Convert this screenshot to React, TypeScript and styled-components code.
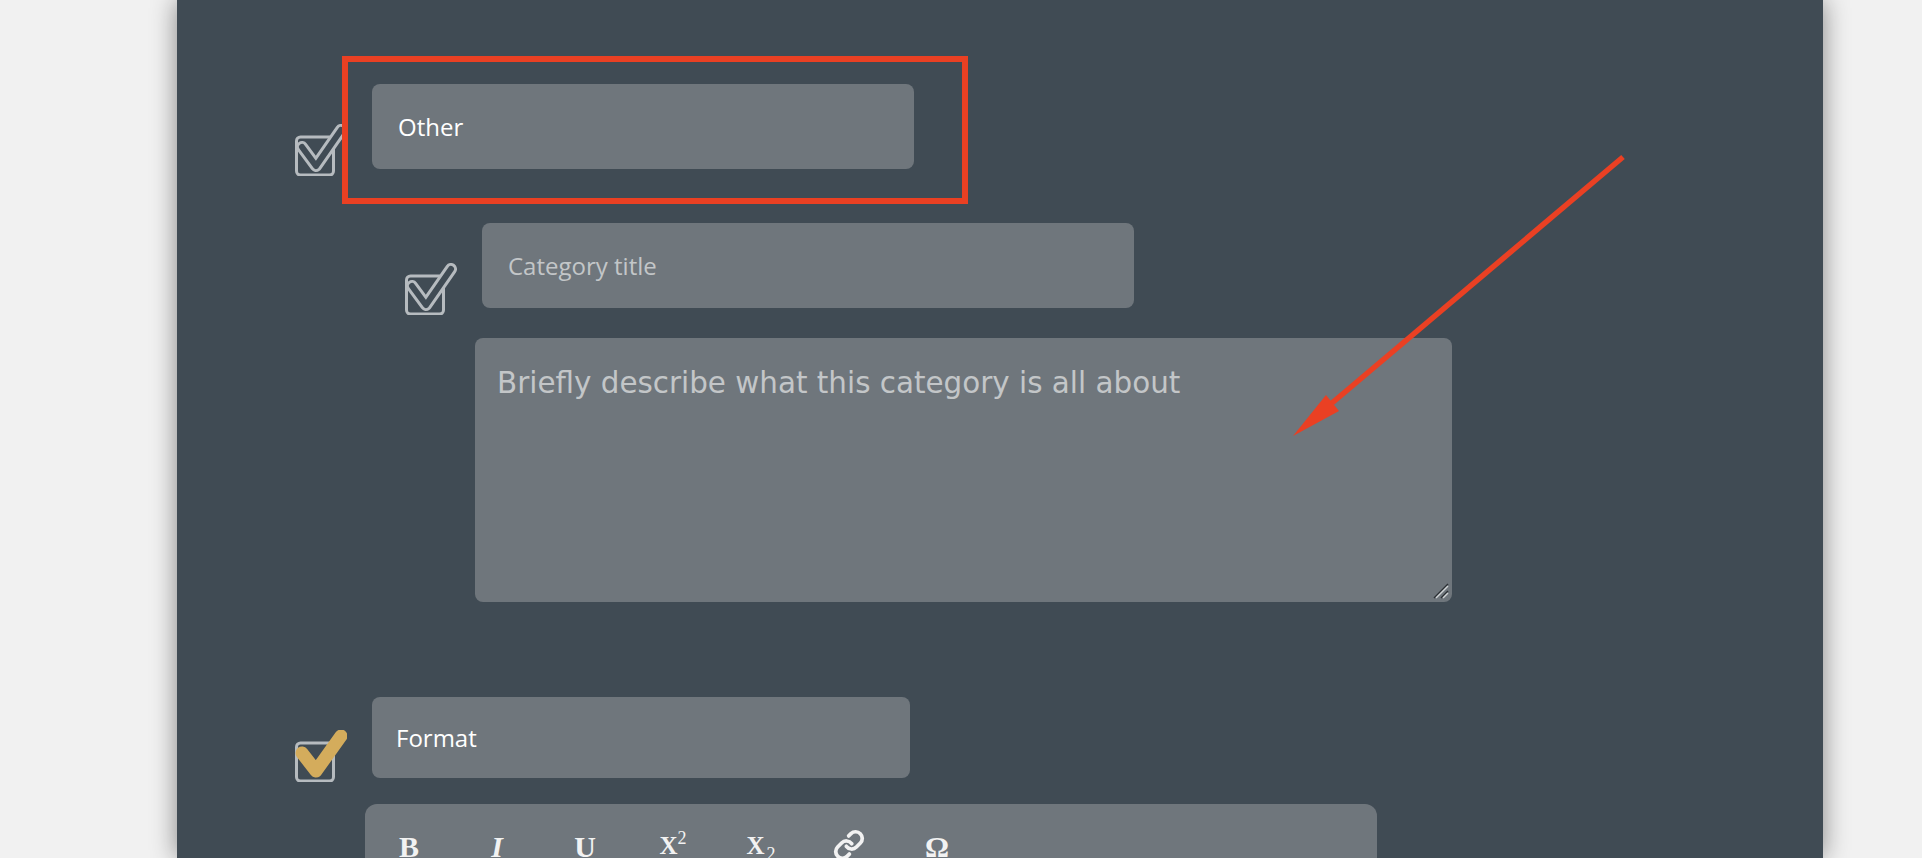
import { Link } from 'lucide-react'
import { createGlobalStyle, styled } from 'styled-components'

interface CheckProps {
  gold?: boolean
}

function Check({ gold }: CheckProps) {
  return (
    <CheckIcon viewBox="0 0 52 52">
      <rect x="1.5" y="13" width="37" height="38" rx="4" fill="none" stroke="#b6bbbf" strokeWidth="3" />
      {gold ? (
        <path d="M7 23 L21 41 L46 6" fill="none" stroke="#d4ac5c" strokeWidth="13" strokeLinecap="round" strokeLinejoin="round" />
      ) : (
        <>
          <path d="M7 23 L21 42 L46 6" fill="none" stroke="#b6bbbf" strokeWidth="12" strokeLinecap="round" strokeLinejoin="round" />
          <path d="M7 23 L21 42 L46 6" fill="none" stroke="#404b54" strokeWidth="6" strokeLinecap="round" strokeLinejoin="round" />
        </>
      )}
    </CheckIcon>
  )
}

function App() {
  return (
    <>
      <GlobalStyle />
      <Panel>
        <Row>
          <Check />
          <TitleInput $width={542} defaultValue="Other" />
        </Row>
        <Row $indent={110} $gap={47}>
          <Check />
          <TitleInput $width={652} placeholder="Category title" />
        </Row>
        <DescriptionWrap>
          <Description placeholder="Briefly describe what this category is all about" />
          <Grip viewBox="0 0 16 16">
            <path d="M1 15 L15 1" stroke="#2b2f33" strokeWidth="1.4" />
            <path d="M3 15 L15 3" stroke="#d0d3d5" strokeWidth="1.4" />
            <path d="M8 15 L15 8" stroke="#2b2f33" strokeWidth="1.4" />
            <path d="M10 15 L15 10" stroke="#d0d3d5" strokeWidth="1.4" />
          </Grip>
        </DescriptionWrap>
        <FormatRow>
          <Check gold />
          <FormatInput defaultValue="Format" />
        </FormatRow>
        <Toolbar>
          <ToolButton>B</ToolButton>
          <ItalicButton>I</ItalicButton>
          <ToolButton>U</ToolButton>
          <ScriptButton>
            X<sup>2</sup>
          </ScriptButton>
          <ScriptButton>
            X<sub>2</sub>
          </ScriptButton>
          <IconButton>
            <Link size={32} strokeWidth={2.8} />
          </IconButton>
          <ToolButton>Ω</ToolButton>
        </Toolbar>

        <RedBox />
        <Arrow viewBox="0 0 340 290">
          <path d="M335 4 L44 250" stroke="#ea4023" strokeWidth="5.5" fill="none" />
          <path d="M5 283 L38 242 L51 258 Z" fill="#ea4023" />
        </Arrow>
      </Panel>
    </>
  )
}

const GlobalStyle = createGlobalStyle`
  html, body {
    height: 100%;
    margin: 0;
    overflow: hidden;
    background: #f1f1f1;
  }
`

const Panel = styled.div`
  position: relative;
  box-sizing: border-box;
  width: 1646px;
  height: 858px;
  margin-left: 177px;
  padding: 84px 0 0 118px;
  background: #404b54;
  box-shadow: 0 0 24px rgba(0, 0, 0, 0.45);
`

const Row = styled.div<{ $indent?: number; $gap?: number }>`
  display: flex;
  align-items: flex-start;
  gap: 25px;
  margin-left: ${(p) => p.$indent || 0}px;
  margin-top: ${(p) => p.$gap || 0}px;
`

const FormatRow = styled(Row)`
  margin-top: 95px;

  svg {
    margin-top: 33px;
  }
`

const CheckIcon = styled.svg`
  flex: none;
  width: 52px;
  height: 52px;
  margin-top: 40px;
  filter: blur(0.7px);
`

const TitleInput = styled.input<{ $width: number }>`
  box-sizing: border-box;
  width: ${(p) => p.$width}px;
  height: 85px;
  padding: 0 26px;
  border: 0;
  border-radius: 8px;
  outline: 0;
  background: #6f767c;
  color: #fff;
  font: 24px 'Open Sans', sans-serif;

  &::placeholder {
    color: #c3c6c8;
    opacity: 1;
  }
`

const FormatInput = styled(TitleInput).attrs({ $width: 538 })`
  height: 81px;
  padding: 0 24px;
`

const DescriptionWrap = styled.div`
  position: relative;
  width: 977px;
  height: 264px;
  margin: 23px 0 0 180px;
`

const Description = styled.textarea`
  display: block;
  box-sizing: border-box;
  width: 100%;
  height: 100%;
  padding: 28px 22px;
  border: 0;
  border-radius: 8px;
  outline: 0;
  resize: none;
  background: #6f767c;
  color: #fff;
  font: 29.4px 'DejaVu Sans', sans-serif;

  &::placeholder {
    color: #c3c6c8;
    opacity: 1;
  }
`

const Grip = styled.svg`
  position: absolute;
  right: 3px;
  bottom: 3px;
  width: 16px;
  height: 16px;
`

const Toolbar = styled.div`
  display: flex;
  width: 1012px;
  height: 100px;
  margin: 22px 0 0 70px;
  border-radius: 12px;
  background: #6f767c;
`

const ToolButton = styled.div`
  display: flex;
  flex: none;
  align-items: flex-start;
  justify-content: center;
  width: 88px;
  padding-top: 26px;
  color: #f2f2f2;
  font: bold 30px 'Liberation Serif', serif;
`

const ItalicButton = styled(ToolButton)`
  font-style: italic;
`

const ScriptButton = styled(ToolButton)`
  padding-top: 28px;
  font-size: 25px;

  sup,
  sub {
    font-size: 18px;
    font-weight: normal;
    line-height: 1;
  }

  sup {
    margin-top: -3px;
  }

  sub {
    margin: 13px 0 0 2px;
  }
`

const IconButton = styled(ToolButton)`
  padding-top: 25px;
`

const RedBox = styled.div`
  position: absolute;
  top: 56px;
  left: 165px;
  box-sizing: border-box;
  width: 626px;
  height: 148px;
  border: 6px solid #ea4023;
`

const Arrow = styled.svg`
  position: absolute;
  top: 153px;
  left: 1111px;
  width: 340px;
  height: 290px;
`

export default App
